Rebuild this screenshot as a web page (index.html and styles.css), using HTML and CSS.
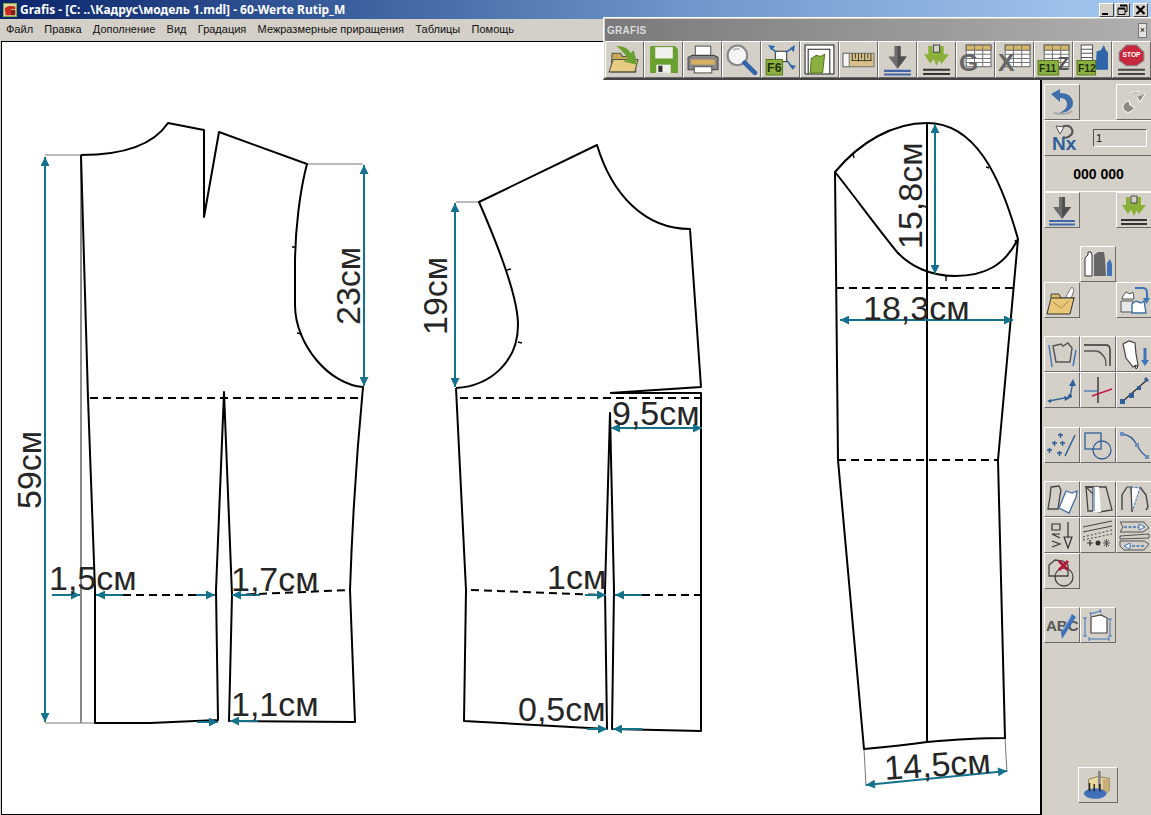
FILE: index.html
```html
<!DOCTYPE html>
<html lang="ru">
<head>
<meta charset="utf-8">
<title>Grafis</title>
<link rel="stylesheet" href="styles.css">
</head>
<body>
<div class="window">
  <header class="titlebar">
    <svg class="app-icon" viewBox="0 0 16 16"><rect width="16" height="16" fill="#7fa23c"/><rect x="1" y="1" width="14" height="14" fill="#d8d8a0"/><path d="M2 6c3-3 8-3 12-2v3H9v7H3z" fill="#c8281e"/><path d="M9 8h5v6H9z" fill="#8a1a14"/></svg>
    <span class="title-text">Grafis - [C: ..\Кадрус\модель 1.mdl] - 60-Werte Rutip_M</span>
    <div class="win-buttons">
      <span class="win-btn"><svg viewBox="0 0 13 12"><path d="M2 9h6v2H2z" fill="#000"/></svg></span>
      <span class="win-btn"><svg viewBox="0 0 13 12"><path d="M4 1.500h7v6H9M2 4.500h7v6H2z" fill="none" stroke="#000"/><path d="M4 1.500h7M2 4.500h7" stroke="#000" stroke-width="2" fill="none"/></svg></span>
      <span class="win-btn win-close"><svg viewBox="0 0 13 12"><path d="M2.500 2l8 8M10.500 2l-8 8" stroke="#000" stroke-width="2.200"/></svg></span>
    </div>
  </header>
  <nav class="menubar">
    <span>Файл</span><span>Правка</span><span>Дополнение</span><span>Вид</span><span>Градация</span><span>Межразмерные приращения</span><span>Таблицы</span><span>Помощь</span>
  </nav>
  <main class="workspace">
    <div class="canvas">
      <svg class="drawing" viewBox="2 42 1038 772">
        <defs>
          <marker id="ah" viewBox="0 0 10 10" refX="10" refY="5" markerUnits="userSpaceOnUse" markerWidth="10" markerHeight="9" orient="auto-start-reverse"><path d="M0 0L10 5L0 10z" fill="#15728c"/></marker>
        </defs>

        <!-- construction lines -->
        <path class="thin" d="M45 155H81M45 723H95M307 164H363M456 202H479M864 749L866 786M1005 738L1007 772"/>
        <path class="grey" d="M81 155V723"/>

        <!-- piece 1 -->
        <path class="cut" d="M81 155C120 155 152 147 168 123L204 130V217L219 132L307 164C300 190 295 230 295 265V305C295 345 330 385 363 387C357 450 352 530 350 590L355 722L229 721L232 595L224 392L216 590L218 720L150 723H95V590L88 398L81 155"/>
        <path class="cut thin-cut" d="M292 247H296M297 333L302 334"/>
        <path class="dash" d="M90 398H361M97 595H216M233 595L350 590"/>

        <!-- piece 2 -->
        <path class="cut" d="M456 388C490 386 518 362 518 325C518 300 500 250 479 202L597 145C612 195 645 229 690 229L701 387L610 393"/>
        <path class="cut" d="M456 388L466 590L464 721L607 729L605 590L610 413L614 590L612 729L701 731V393H612"/>
        <path class="cut thin-cut" d="M507 270L511 269M518 342L522 343"/>
        <path class="dash" d="M460 398H700M471 590L604 595M616 595H700"/>

        <!-- piece 3 -->
        <path class="cut" d="M835 172C860 142 893 123 927 123C975 123 1000 175 1018 239L998 460L1005 738C975 738 950 740 927 742C905 745 885 747 864 749L838 460L835 172C855 197 875 225 897 252C910 266 930 276 955 276C985 276 1005 265 1018 239"/>
        <path class="cut" d="M927 123V742"/>
        <path class="cut thin-cut" d="M853 153L854 158M986 167L989 168M946 276V281M1015 240L1017 244"/>
        <path class="dash" d="M836 288H1014M838 460H997"/>

        <!-- dimension arrows -->
        <g class="arrows">
          <line x1="45" y1="157" x2="45" y2="722" marker-start="url(#ah)" marker-end="url(#ah)"/>
          <line x1="364" y1="165" x2="364" y2="386" marker-start="url(#ah)" marker-end="url(#ah)"/>
          <line x1="455" y1="203" x2="455" y2="387" marker-start="url(#ah)" marker-end="url(#ah)"/>
          <line x1="935" y1="124" x2="935" y2="274" marker-start="url(#ah)" marker-end="url(#ah)"/>
          <line x1="840" y1="320" x2="1013" y2="320" marker-start="url(#ah)" marker-end="url(#ah)"/>
          <line x1="866" y1="785" x2="1007" y2="771" marker-start="url(#ah)" marker-end="url(#ah)"/>
          <line x1="611" y1="428" x2="702" y2="428" marker-start="url(#ah)" marker-end="url(#ah)"/>
          <line x1="52" y1="595" x2="80" y2="595" marker-end="url(#ah)"/>
          <line x1="123" y1="595" x2="96" y2="595" marker-end="url(#ah)"/>
          <line x1="196" y1="595" x2="215" y2="595" marker-end="url(#ah)"/>
          <line x1="260" y1="595" x2="232" y2="595" marker-end="url(#ah)"/>
          <line x1="197" y1="722" x2="218" y2="722" marker-end="url(#ah)"/>
          <line x1="258" y1="721" x2="230" y2="721" marker-end="url(#ah)"/>
          <line x1="585" y1="595" x2="606" y2="595" marker-end="url(#ah)"/>
          <line x1="642" y1="595" x2="615" y2="595" marker-end="url(#ah)"/>
          <line x1="587" y1="729" x2="607" y2="729" marker-end="url(#ah)"/>
          <line x1="642" y1="729" x2="613" y2="729" marker-end="url(#ah)"/>
        </g>

        <!-- dimension labels -->
        <g class="dims">
          <text transform="translate(41,509) rotate(-90)">59см</text>
          <text transform="translate(360,325) rotate(-90)">23см</text>
          <text transform="translate(447,335) rotate(-90)">19см</text>
          <text transform="translate(922,249) rotate(-90)">15,8см</text>
          <text transform="translate(885,780) rotate(-4)">14,5см</text>
          <text x="49" y="590">1,5см</text>
          <text x="231" y="591">1,7см</text>
          <text x="231" y="716">1,1см</text>
          <text x="547" y="589">1см</text>
          <text x="518" y="721">0,5см</text>
          <text x="612" y="425">9,5см</text>
          <text x="863" y="320">18,3см</text>
        </g>
      </svg>
    </div>

    <aside class="sidebar">
      <section class="tools">
        <button class="btn"><svg viewBox="0 0 32 32"><path d="M5 8l9-5v4c8 0 13 4 13 10s-6 10-14 10c5-2 8-5 8-9s-3-6-7-6v4z" fill="#3f6fa8"/><path d="M8 27c8 2 14 1 18-2" stroke="#aaa" stroke-width="2" fill="none"/></svg></button>
        <button class="btn c3"><svg viewBox="0 0 32 32"><path d="M27 8l-5 8-3-5M22 6c-4-1-8 0-10 2M5 22c0-4 2-6 6-7l1 4 5 3-5 4c-3 1-6-1-7-4z" fill="#8c8a84" stroke="#fff" stroke-width="1"/></svg></button>
        <div class="nx-row">
          <svg viewBox="0 0 28 34" class="nx-icon"><path d="M8 11c1-5 5-7 9-6s6 6 3 9-6 3-8 2" fill="none" stroke="#555" stroke-width="2"/><path d="M5 5l8 1-4 7z" fill="#fff" stroke="#555"/><text x="1" y="29" class="nx-text">Nx</text></svg>
          <span class="nx-input">1</span>
        </div>
        <div class="counter">000 000</div>
        <button class="btn"><svg viewBox="0 0 32 32"><use href="#s-down"/></svg></button>
        <button class="btn c3"><svg viewBox="0 0 32 32"><use href="#s-greendown"/></svg></button>
      </section>

      <section class="tools gap-18">
        <button class="btn c2"><svg viewBox="0 0 32 32"><path d="M3 10l3-3V4h3l1 3v21H3z" fill="#fff" stroke="#333"/><path d="M12 7l4-3h6l1 7 1 17H12z" fill="#666"/><path d="M25 28V15l3-4 2 5v12z" fill="#3f74b8"/></svg></button>
        <button class="btn c1"><svg viewBox="0 0 32 32"><path d="M18 17l5-10 3-4 2 3-2 6-3 7z" fill="#fff" stroke="#777"/><path d="M5 14l0-4h8l2 4h14" fill="#d9b96a" stroke="#444"/><path d="M5 14h23l-4 16H1z" fill="#e8c878" stroke="#333"/><path d="M7 18l8 6 8-7" fill="none" stroke="#a88a40"/></svg></button>
        <button class="btn c3"><svg viewBox="0 0 32 32"><path d="M5 12l3-4 4 2 3-2 1 7H4z" fill="#fff" stroke="#555"/><path d="M3 17h12v11H3z" fill="#e8e8e8" stroke="#555"/><path d="M14 20l4-3 5 2 3-2 2 12H14z" fill="#fff" stroke="#3f6fa8" stroke-width="1.400"/><path d="M17 4h8c3 0 4 2 4 5v6" fill="none" stroke="#3f74b8" stroke-width="2"/><path d="M25 14h7l-3.500 6z" fill="#3f74b8"/></svg></button>
      </section>

      <section class="tools gap-18">
        <button class="btn"><svg viewBox="0 0 32 32"><path d="M7 8l8-2 2 2 5-3 4 5-2 14H10z" fill="none" stroke="#555" stroke-width="1.400"/><path d="M3 7l3 22M27 28l3-16" stroke="#3f74b8" stroke-width="1.400" fill="none"/></svg></button>
        <button class="btn"><svg viewBox="0 0 32 32"><path d="M2 7h22c3 0 4 2 4 5v16" fill="none" stroke="#333" stroke-width="1.400"/><path d="M2 13h12c4 0 6 3 9 7 1 3 1 5 1 8" fill="none" stroke="#555" stroke-width="1.400"/></svg></button>
        <button class="btn"><svg viewBox="0 0 32 32"><path d="M5 6l6-3 6 2 1 11 2 11-5 2L8 20z" fill="#fff" stroke="#444" stroke-width="1.200"/><path d="M27 10v14" stroke="#3f74b8" stroke-width="3"/><path d="M23 22h8l-4 6z" fill="#3f74b8"/><path d="M17 27l3 2-2 2z" fill="#fff" stroke="#333"/></svg></button>
        <button class="btn"><svg viewBox="0 0 32 32"><path d="M3 27l21-4 3-15" fill="none" stroke="#2f5f98" stroke-width="1.300"/><path d="M1 27l4-2v4zM18 22l6 2-5 3zM23 12l4-7 3 7z" fill="#2f5f98"/><circle cx="24" cy="22" r="2" fill="#2f5f98"/></svg></button>
        <button class="btn"><svg viewBox="0 0 32 32"><path d="M16 3v26" stroke="#333" stroke-width="1.400"/><path d="M2 17h14" stroke="#3f74b8" stroke-width="1.300"/><path d="M10 22l20-7" stroke="#c01848" stroke-width="1.400"/></svg></button>
        <button class="btn"><svg viewBox="0 0 32 32"><path d="M4 28L30 5" stroke="#333" stroke-width="1.400"/><path d="M2 25l5 0 0 5-5 0zM11 19l5 0 0 5-5 0zM19 12l4 0 0 4-4 0z" fill="#2f5f98"/><path d="M28 3l3 4-3 1-2-3z" fill="#2f5f98"/></svg></button>
      </section>

      <section class="tools gap-19">
        <button class="btn"><svg viewBox="0 0 32 32"><path d="M19 27L29 6" stroke="#2f5f98" stroke-width="1.500"/><path d="M12 6h5M14.500 4v5M6 14h5M8.500 12v5M14 14h5M16.500 12v5M1 21h5M3.500 19v5M11 24h5M13.500 22v5" stroke="#2f5f98" stroke-width="1.500"/></svg></button>
        <button class="btn"><svg viewBox="0 0 32 32"><rect x="3" y="4" width="16" height="16" fill="none" stroke="#2f5f98" stroke-width="1.300"/><circle cx="20" cy="21" r="9" fill="none" stroke="#2f5f98" stroke-width="1.300"/></svg></button>
        <button class="btn"><svg viewBox="0 0 32 32"><path d="M4 5c8 1 12 5 15 11 3 6 6 10 11 12" fill="none" stroke="#2f5f98" stroke-width="1.300"/><rect x="2" y="3" width="4" height="4" fill="#6a8fc0"/><rect x="17" y="14" width="4" height="4" fill="#6a8fc0"/><rect x="27" y="26" width="4" height="4" fill="#6a8fc0"/></svg></button>
      </section>

      <section class="tools gap-18">
        <button class="btn"><svg viewBox="0 0 32 32"><path d="M5 4l8-1 2 4-1 5-2 14H2l2-12z" fill="none" stroke="#444" stroke-width="1.300"/><path d="M20 8l6 2 5-2-1 6-7 16-10-5z" fill="#fff" stroke="#3f6fa8" stroke-width="1.300"/></svg></button>
        <button class="btn"><svg viewBox="0 0 32 32"><path d="M4 4h20l6 23-13 2-2-14z" fill="none" stroke="#444" stroke-width="1.300"/><path d="M4 4h7v24H6z" fill="none" stroke="#444" stroke-width="1.300"/><path d="M11 4h6l2 25h-8z" fill="#fff"/><path d="M12 4v24" stroke="#3f74b8" stroke-width="1.200"/></svg></button>
        <button class="btn"><svg viewBox="0 0 32 32"><path d="M4 27V12l5-8M28 27l2-3-2-12-6-8" fill="none" stroke="#444" stroke-width="1.400"/><path d="M13 4l9 1-8 24z" fill="#fff" stroke="#3f74b8" stroke-dasharray="3 1"/><path d="M9 4l4 0 1 25" fill="none" stroke="#444" stroke-width="1.200"/></svg></button>
        <button class="btn"><svg viewBox="0 0 32 32"><path d="M22 3v16M18 18l4 11 4-11z" fill="none" stroke="#333" stroke-width="1.200"/><path d="M6 5h8v6H6zM14 15H6l8 4M6 22l8 3-8 3" fill="none" stroke="#333" stroke-width="1.200"/></svg></button>
        <button class="btn"><svg viewBox="0 0 32 32"><path d="M1 8L30 2M1 13l29-6" stroke="#444" stroke-width="1"/><path d="M1 18l29-7M1 21l29-6" stroke="#444" stroke-dasharray="2 2"/><path d="M5 24h6M8 21v6" stroke="#333" stroke-width="1.200"/><circle cx="16" cy="24" r="2.500" fill="#333"/><path d="M21 24h7M24.500 20v8M22 21l5 6M27 21l-5 6" stroke="#555"/></svg></button>
        <button class="btn"><svg viewBox="0 0 32 32"><path d="M2 3h24l5 6-6 4H2l3-5z" fill="none" stroke="#555"/><path d="M6 8h18" stroke="#3f74b8" stroke-dasharray="3 1.500" stroke-width="1.300"/><path d="M21 5l6 3-6 3z" fill="#fff" stroke="#3f74b8"/><path d="M2 17l29-2v4L2 20z" fill="none" stroke="#555"/><path d="M2 22h24l5 3-5 6H6l-4-4z" fill="none" stroke="#555"/><path d="M26 27H10" stroke="#3f74b8" stroke-dasharray="3 1.500" stroke-width="1.300"/><path d="M12 24l-6 3 6 3z" fill="#fff" stroke="#3f74b8"/></svg></button>
        <button class="btn"><svg viewBox="0 0 32 32"><path d="M3 10l6-5 8 1 5 4v11H3z" fill="none" stroke="#444" stroke-width="1.300"/><circle cx="18" cy="22" r="9" fill="none" stroke="#444" stroke-width="1.300"/><path d="M13 6l9 9M22 6l-9 9" stroke="#b01838" stroke-width="3"/></svg></button>
      </section>

      <section class="tools gap-18">
        <button class="btn"><svg viewBox="0 0 32 32"><text x="0" y="22" class="abc-text">ABC</text><path d="M26 5l4 3-14 22-1-7z" fill="#3f74b8"/><path d="M25 7l-8 14" stroke="#a8c4e8"/></svg></button>
        <button class="btn"><svg viewBox="0 0 32 32"><path d="M9 8l10-2 6 3v15H9z" fill="#fff" stroke="#444" stroke-width="1.200"/><path d="M3 9v18M1 9h4M1 27h4M28 10v17M26 10h4M26 27h4M7 30h20M7 28v4M27 28v4M8 5l11-3M8 3l1 4M18 0l1 4" fill="none" stroke="#3f74b8"/></svg></button>
      </section>

      <div class="bottom-tool">
        <button class="btn"><svg viewBox="0 0 34 34"><path d="M7 11l10-3 12 2v13l-6 5-16-3z" fill="#e8d8a0" stroke="#8a7a50"/><path d="M22 11l7-1v13l-7 5z" fill="#c8b078"/><path d="M17 2h3v20h-3z" fill="#888"/><ellipse cx="14" cy="26" rx="12" ry="5.500" fill="#3f70b8"/><path d="M8 24v-9M13 24v-8M19 24v-8" stroke="#222" stroke-width="1.500"/></svg></button>
      </div>
    </aside>
  </main>

  <div class="float-toolbar">
    <div class="float-head"><span class="float-title">GRAFIS</span><span class="float-close">×</span></div>
    <div class="float-row">
      <button class="tbtn"><svg viewBox="0 0 32 32"><path d="M3 28l1-18h8l2 3h12l1 15z" fill="#c8a858" stroke="#554"/><path d="M1 28l4-12h24l-3 12z" fill="#e8cc84" stroke="#554"/><path d="M8 3c8 0 12 3 14 7l3-3 3 14-13-3 4-3c-2-4-6-8-11-12z" fill="#6aa030"/></svg></button>
      <button class="tbtn"><svg viewBox="0 0 32 32"><path d="M3 3h24l3 3v23H3z" fill="#6aa030"/><rect x="8" y="4" width="17" height="11" fill="#f0f0ee"/><rect x="9" y="21" width="14" height="8" fill="#f0f0ee"/><rect x="11" y="22" width="4" height="6" fill="#333"/></svg></button>
      <button class="tbtn"><svg viewBox="0 0 32 32"><rect x="9" y="3" width="15" height="11" fill="#fff" stroke="#555"/><path d="M2 14l4-2h21l4 2v12H2z" fill="#888" stroke="#444"/><rect x="5" y="16" width="23" height="5" fill="#d8b060"/><rect x="8" y="23" width="17" height="6" fill="#fff" stroke="#555"/></svg></button>
      <button class="tbtn"><svg viewBox="0 0 32 32"><circle cx="12" cy="12" r="9.500" fill="#f4f4f4" stroke="#888" stroke-width="2"/><path d="M8 7a6 6 0 0 1 6-1" stroke="#bbb" fill="none" stroke-width="2"/><path d="M19 19l10 10" stroke="#2f64a8" stroke-width="4.500" stroke-linecap="round"/></svg></button>
      <button class="tbtn"><svg viewBox="0 0 32 32"><rect x="11" y="8" width="11" height="10" fill="#fff" stroke="#333"/><path d="M4 2l7 1-4 4zM30 2l-1 7-4-4zM31 22l-7-1 4 5z" fill="#2f6aa8"/><path d="M7 5l5 4M26 6l-5 3M22 17l6 7" stroke="#2f6aa8" stroke-width="1.500"/><rect x="2" y="16" width="16" height="15" fill="#8ab040" stroke="#5a7a20"/><text x="3" y="28" class="key-text">F6</text></svg></button>
      <button class="tbtn"><svg viewBox="0 0 32 32"><rect x="2" y="2" width="28" height="28" fill="#fff"/><path d="M2 30V2h28v28M5 30V6h21v24M2 30h28" fill="none" stroke="#222" stroke-width="1"/><path d="M8 15l5-3 4 1 4-2-2 18H7z" fill="#8ab040" stroke="#5a7a20"/></svg></button>
      <button class="tbtn"><svg viewBox="0 0 32 32"><rect x="1" y="10" width="30" height="13" fill="#d8c088" stroke="#777"/><rect x="1" y="10" width="6" height="13" fill="#f4f4f4" stroke="#777"/><path d="M10 10v7M13 10v5M16 10v8M19 10v5M22 10v8M25 10v5M28 10v7M9 17h20" stroke="#443" fill="none"/></svg></button>
      <button class="tbtn"><svg viewBox="0 0 32 32"><use href="#s-down"/></svg></button>
      <button class="tbtn"><svg viewBox="0 0 32 32"><use href="#s-greendown"/></svg></button>
      <button class="tbtn"><svg viewBox="0 0 32 32"><use href="#s-table"/><text x="0" y="27" class="big-letter">G</text></svg></button>
      <button class="tbtn"><svg viewBox="0 0 32 32"><use href="#s-table"/><text x="0" y="27" class="big-letter">X</text></svg></button>
      <button class="tbtn"><svg viewBox="0 0 32 32"><use href="#s-table"/><text x="20" y="26" class="mid-letter">Z</text><rect x="1" y="17" width="20" height="14" fill="#8ab040" stroke="#5a7a20"/><text x="2" y="28" class="key-text small">F11</text></svg></button>
      <button class="tbtn"><svg viewBox="0 0 32 32"><path d="M5 2h11v16H5z" fill="#fff" stroke="#555"/><path d="M5 6h11M5 10h11M5 14h11" stroke="#555"/><path d="M20 8l4-1 3-5 2 5 2 2v17H19z" fill="#2f64a8"/><rect x="1" y="17" width="18" height="14" fill="#8ab040" stroke="#5a7a20"/><text x="2" y="28" class="key-text small">F12</text></svg></button>
      <button class="tbtn"><svg viewBox="0 0 32 32"><path d="M11 2h10l7 7v8l-7 5H11l-7-5V9z" fill="#c8283e" stroke="#888"/><text x="16" y="14" class="stop-text">STOP</text><path d="M3 26h26M3 30h26" stroke="#444" stroke-width="2"/></svg></button>
    </div>
  </div>
</div>

<svg class="sprites" aria-hidden="true">
  <symbol id="s-down" viewBox="0 0 32 32"><path d="M13 3h6v10h6l-9 12-9-12h6z" fill="#6e6e6e"/><path d="M16 3h3v10h6l-9 12z" fill="#4f4f4f"/><path d="M3 27h26M3 30.500h26" stroke="#3f66a8" stroke-width="2"/></symbol>
  <symbol id="s-greendown" viewBox="0 0 32 32"><path d="M8 3h4v8h4l-6 9-6-9h4zM19 3h4v8h5l-7 9-7-9h5z" fill="#8ab038"/><path d="M10 9h12l-6 13z" fill="#8ab038"/><path d="M13 2h6v7h-6z" fill="none" stroke="#444"/><path d="M3 26h26M3 30h26" stroke="#333" stroke-width="2"/></symbol>
  <symbol id="s-table" viewBox="0 0 32 32"><rect x="7" y="2" width="24" height="21" fill="#fff" stroke="#666"/><rect x="7" y="2" width="24" height="5" fill="#d8b868" stroke="#666"/><path d="M7 11h24M7 15h24M7 19h24M15 2v21M23 2v21" stroke="#777" fill="none"/></symbol>
</svg>
</body>
</html>
```

FILE: styles.css
```css
* { box-sizing: border-box; }
html, body { margin: 0; padding: 0; height: 100%; overflow: hidden; }
body { background: #d4d0c8; font-family: "Noto Sans", "Liberation Sans", sans-serif; }

.window { position: relative; width: 1151px; height: 815px; display: flex; flex-direction: column; }

.titlebar {
  height: 19px; flex: none; display: flex; align-items: center; padding: 1px 3px 1px 3px; gap: 3px;
  background: linear-gradient(90deg, #0a246a 0%, #3a5f9e 30%, #6f97cb 60%, #a6caf0 100%);
}
.app-icon { width: 14px; height: 14px; flex: none; }
.title-text { color: #fff; font-weight: 700; font-size: 12px; white-space: nowrap; }
.win-buttons { margin-left: auto; display: flex; gap: 1px; }
.win-btn {
  width: 15px; height: 14px; background: #d4d0c8; display: flex;
  border: 1px solid; border-color: #fff #404040 #404040 #fff;
}
.win-btn svg { width: 100%; height: 100%; }
.win-close { margin-left: 2px; }

.menubar {
  height: 22px; flex: none; display: flex; align-items: center; gap: 11.3px; padding: 0 0 2px 6px;
  background: #d4d0c8; font-family: "Liberation Sans", sans-serif; font-size: 11px; color: #111; white-space: nowrap;
}

.workspace { flex: 1; display: flex; min-height: 0; }
.canvas {
  width: 1041px; flex: none; margin-left: 1px; background: #fff;
  border: 1px solid #000; border-right-width: 2px;
  height: 774px;
}
.drawing { display: block; width: 1038px; height: 772px; }

.cut { fill: none; stroke: #000; stroke-width: 2; stroke-linejoin: round; }
.thin-cut { stroke-width: 1.4; }
.thin { fill: none; stroke: #777; stroke-width: 1; }
.grey { fill: none; stroke: #8a8a8a; stroke-width: 2; }
.dash { fill: none; stroke: #000; stroke-width: 2; stroke-dasharray: 8 5; }
.arrows line { stroke: #15728c; stroke-width: 2; }
.dims text { font-family: "Liberation Sans", Arial, sans-serif; font-size: 34px; fill: #262626; }

.sidebar {
  flex: 1; min-width: 0; display: flex; flex-direction: column;
  padding: 43px 0 12px 2px; background: #d4d0c8;
}
.tools { display: grid; grid-template-columns: repeat(3, 36px); grid-auto-rows: 36px; }
.gap-18 { margin-top: 18px; }
.gap-19 { margin-top: 19px; }
.c1 { grid-column: 1; }
.c2 { grid-column: 2; }
.c3 { grid-column: 3; }

.btn, .tbtn {
  padding: 1px; margin: 0; display: flex; align-items: center; justify-content: center;
  background: #d4d0c8; border: 1px solid; border-color: #fff #6a6a6a #6a6a6a #fff;
}
.btn svg { width: 32px; height: 32px; display: block; }
.tbtn svg { width: 33px; height: 33px; display: block; }

.nx-row {
  grid-column: 1 / span 3; display: flex; align-items: center; gap: 8px; padding-left: 6px;
  border-top: 1px solid #fff; border-left: 1px solid #fff; border-bottom: 1px solid #6a6a6a;
}
.btn svg.nx-icon, .nx-icon { width: 28px; height: 34px; flex: none; }
.nx-text { font-family: "Liberation Sans", sans-serif; font-weight: 700; font-size: 19px; fill: #2f5f98; }
.nx-input {
  width: 54px; height: 18px; margin-left: 6px; font-size: 11px; line-height: 16px; padding-left: 2px; color: #111;
  border: 1px solid; border-color: #555 #fff #fff #555; background: #d4d0c8;
  font-family: "Liberation Sans", sans-serif;
}
.counter {
  grid-column: 1 / span 3; display: flex; align-items: center; justify-content: center;
  font-family: "Liberation Sans", sans-serif; font-weight: 700; font-size: 14px; color: #000;
  border-left: 1px solid #fff; border-bottom: 1px solid #fff;
}

.abc-text { font-family: "Liberation Sans", sans-serif; font-weight: 700; font-size: 15px; fill: #555; }

.bottom-tool { margin-top: auto; padding-left: 34px; display: flex; }
.bottom-tool .btn { width: 40px; height: 36px; }

.float-toolbar {
  position: absolute; left: 603px; top: 17px; right: 0; height: 63px; background: #d4d0c8;
  border-top: 1px solid #fff; border-left: 1px solid #fff; border-bottom: 2px solid #444;
  padding: 1px 0 0 1px;
}
.float-head {
  height: 22px; display: flex; align-items: center; justify-content: space-between; padding: 0 4px 0 2px;
  background: linear-gradient(90deg, #7a7a7a, #b0b0b0);
}
.float-title { font-family: "Liberation Sans", sans-serif; font-weight: 700; font-size: 10px; color: #dcdcdc; letter-spacing: .3px; }
.float-close {
  width: 9px; height: 15px; display: flex; align-items: center; justify-content: center;
  background: #e4e2dc; border: 1px solid #777; font-size: 9px; line-height: 1; color: #000;
  font-family: "Liberation Sans", sans-serif;
}
.float-row { display: flex; }
.tbtn { width: 39px; height: 37px; flex: none; }

.key-text { font-family: "Liberation Sans", sans-serif; font-weight: 700; font-size: 12px; fill: #1e2e10; }
.key-text.small { font-size: 10px; }
.big-letter { font-family: "Liberation Sans", sans-serif; font-weight: 700; font-size: 24px; fill: #666; }
.mid-letter { font-family: "Liberation Sans", sans-serif; font-weight: 700; font-size: 18px; fill: #555; }
.stop-text { font-family: "Liberation Sans", sans-serif; font-weight: 700; font-size: 6.500px; fill: #fff; text-anchor: middle; }

.sprites { position: absolute; width: 0; height: 0; }
```
